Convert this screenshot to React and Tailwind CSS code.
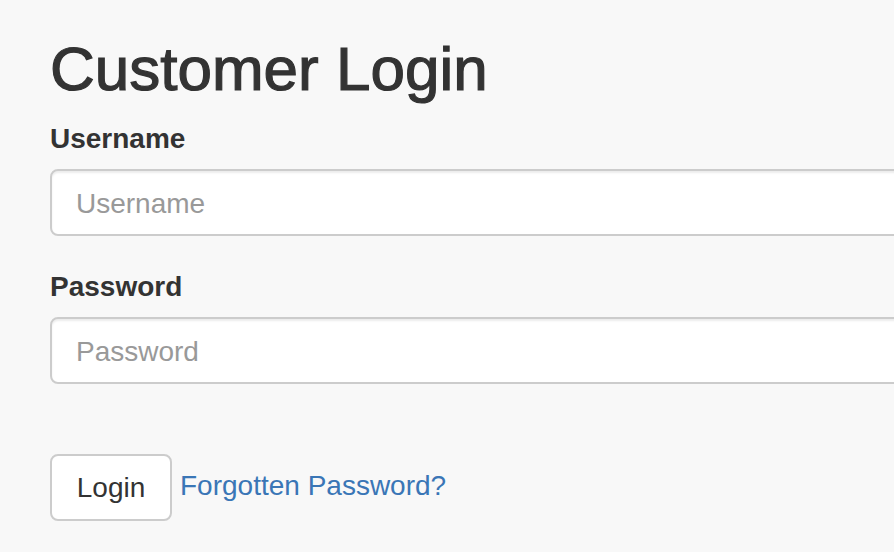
import React, { useState } from "react";

export default function App() {
  const [username, setUsername] = useState("");
  const [password, setPassword] = useState("");

  return (
    <div
      className="h-[552px] w-full overflow-hidden bg-[#f8f8f8] pl-[50px] text-[#333]"
      style={{ fontFamily: '"Liberation Sans", Arial, sans-serif' }}
    >
      <h1 className="mt-[38px] text-[62px] leading-[62px] font-normal whitespace-nowrap [-webkit-text-stroke:1.2px_#333]">
        Customer Login
      </h1>

      <form onSubmit={(e) => e.preventDefault()}>
        {/* username */}
        <label htmlFor="input-username" className="mt-[24px] block text-[28px] leading-[30px] font-bold">
          Username
        </label>
        <input
          id="input-username"
          type="text"
          placeholder="Username"
          value={username}
          onChange={(e) => setUsername(e.target.value)}
          className="mt-[15px] block h-[67px] w-[1000px] rounded-[8px] border-2 border-[#ccc] bg-white px-[24px] pt-[3px] text-[28px] text-[#555] shadow-[inset_0_2px_2px_rgba(0,0,0,0.075)] outline-none placeholder:text-[#999]"
        />

        {/* password */}
        <label htmlFor="input-password" className="mt-[36px] block text-[28px] leading-[30px] font-bold">
          Password
        </label>
        <input
          id="input-password"
          type="password"
          placeholder="Password"
          value={password}
          onChange={(e) => setPassword(e.target.value)}
          className="mt-[15px] block h-[67px] w-[1000px] rounded-[8px] border-2 border-[#ccc] bg-white px-[24px] pt-[3px] text-[28px] text-[#555] shadow-[inset_0_2px_2px_rgba(0,0,0,0.075)] outline-none placeholder:text-[#999]"
        />

        <div className="mt-[70px] flex items-center gap-[8px]">
          <button
            type="submit"
            className="h-[67px] w-[122px] rounded-[8px] border-2 border-[#ccc] bg-white text-[28px] leading-[30px] text-[#333]"
          >
            Login
          </button>
          <a href="#" className="mb-[4px] text-[28px] leading-[30px] text-[#3a76b6] whitespace-nowrap">
            Forgotten Password?
          </a>
        </div>
      </form>
    </div>
  );
}
